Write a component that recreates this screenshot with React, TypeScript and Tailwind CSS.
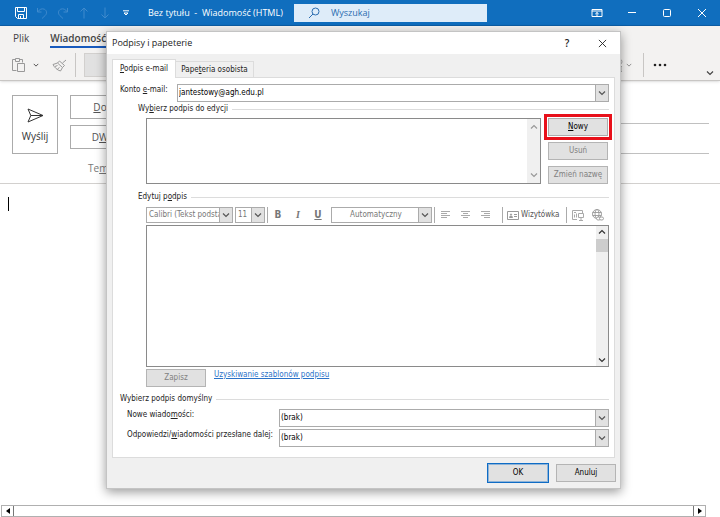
import { useState } from "react";
import type { ReactNode } from "react";
import clsx from "clsx";

function ChevronIcon({ className, up = false }: { className?: string; up?: boolean }) {
  return (
    <svg viewBox="0 0 8 8" className={clsx("w-2 h-2 shrink-0", className)} fill="none" stroke="currentColor" strokeWidth="1.2">
      <path d={up ? "M1 5.5 4 2.5 7 5.5" : "M1 2.5 4 5.5 7 2.5"} />
    </svg>
  );
}

function IconButton({ label, className, children }: { label: string; className?: string; children: ReactNode }) {
  return (
    <button type="button" aria-label={label} className={clsx("flex items-center justify-center shrink-0", className)}>
      {children}
    </button>
  );
}

function Combo({
  id,
  label,
  options,
  className,
  muted = false,
  centered = false,
}: {
  id: string;
  label?: string;
  options: string[];
  className?: string;
  muted?: boolean;
  centered?: boolean;
}) {
  return (
    <div className={clsx("flex items-stretch bg-white border border-[#ababab]", className)}>
      <select
        id={id}
        aria-label={label}
        className={clsx(
          "appearance-none flex-1 min-w-0 outline-none bg-white",
          muted ? "text-[#777] pl-[2px]" : "text-black pl-px",
          centered && "text-center"
        )}
      >
        {options.map((option) => (
          <option key={option}>{option}</option>
        ))}
      </select>
      <span className="w-[14px] -my-px -mr-px shrink-0 flex items-center justify-center bg-[#e1e1e1] border border-[#ababab] text-[#555] pointer-events-none">
        <ChevronIcon />
      </span>
    </div>
  );
}

function PushButton({ className, children, disabled }: { className?: string; children: ReactNode; disabled?: boolean }) {
  return (
    <button
      type="button"
      disabled={disabled}
      className={clsx(
        "w-[60px] h-[18px] shrink-0 flex items-center justify-center border bg-[#e1e1e1]",
        disabled ? "text-[#808080]" : "text-black",
        className ?? "border-[#b4b4b4]"
      )}
    >
      <span>{children}</span>
    </button>
  );
}

function GroupHeading({ className, children }: { className?: string; children: ReactNode }) {
  return (
    <div className={clsx("flex items-center gap-1 h-3 text-[#222]", className)}>
      <h2 className="whitespace-nowrap">{children}</h2>
      <span className="flex-1 h-px bg-[#dcdcdc]" />
    </div>
  );
}

function Separator({ className }: { className?: string }) {
  return <span className={clsx("w-px h-4 bg-[#ababab] shrink-0", className)} />;
}

function TitleBar() {
  return (
    <header className="flex items-center h-[26px] shrink-0 bg-[#106ebe] border-b border-[#0d5ea6] text-white">
      <div className="flex items-center gap-[5px] pl-[13px]">
        <IconButton label="Zapisz" className="w-4 h-4">
          <svg viewBox="0 0 14 14" className="w-[14px] h-[14px]" fill="none" stroke="currentColor">
            <path d="M1.5 1.5h11v11h-9l-2-2zM3.5 1.5v4h7v-4M4.5 12.5v-4h5v4M6.5 10v2.5" />
          </svg>
        </IconButton>
        <IconButton label="Cofnij" className="w-4 h-4 text-[#3f8acd]">
          <svg viewBox="0 0 12 12" className="w-3 h-3" fill="none" stroke="currentColor">
            <path d="M1.5 1v4h4M1.8 4.8C3.5 2.2 6 1.2 8.3 2.2c2.6 1.2 2.9 4.3 1 6.2L6 11.5" />
          </svg>
        </IconButton>
        <IconButton label="Wykonaj ponownie" className="w-4 h-4 text-[#3f8acd]">
          <svg viewBox="0 0 12 12" className="w-3 h-3" fill="none" stroke="currentColor">
            <path d="M10.5 1v4h-4M10.2 4.8C8.5 2.2 6 1.2 3.7 2.2c-2.6 1.2-2.9 4.3-1 6.2L6 11.5" />
          </svg>
        </IconButton>
        <IconButton label="Poprzedni element" className="w-4 h-4 text-[#3f8acd]">
          <svg viewBox="0 0 12 12" className="w-3 h-3" fill="none" stroke="currentColor">
            <path d="M6 11.5V1M2.5 4.5 6 1l3.5 3.5" />
          </svg>
        </IconButton>
        <IconButton label="Następny element" className="w-4 h-4 text-[#3f8acd]">
          <svg viewBox="0 0 12 12" className="w-3 h-3" fill="none" stroke="currentColor">
            <path d="M6 .5V11M2.5 7.5 6 11l3.5-3.5" />
          </svg>
        </IconButton>
        <IconButton label="Dostosuj" className="w-4 h-4">
          <svg viewBox="0 0 8 6" className="w-2 h-[6px]" fill="none" stroke="currentColor">
            <path d="M1 .8h6M2 3l2 2 2-2z" />
          </svg>
        </IconButton>
      </div>
      <h1 className="ml-[14px] w-[146px] shrink-0 whitespace-pre text-[9px]">Bez tytułu  -  Wiadomość (HTML)</h1>
      <label className="flex items-center w-[193px] h-[18px] bg-[#deecf9] text-[#2b6cb0]">
        <svg viewBox="0 0 12 12" className="w-3 h-3 ml-[14px] shrink-0" fill="none" stroke="currentColor">
          <circle cx="7.5" cy="4.5" r="3.5" />
          <path d="M5 7 1 11" />
        </svg>
        <input
          type="search"
          aria-label="Wyszukaj"
          placeholder="Wyszukaj"
          className="flex-1 min-w-0 ml-[11px] bg-transparent outline-none text-[9px] placeholder:text-[#2b6cb0]"
        />
      </label>
      <div className="ml-auto flex items-center gap-[19px] pr-[10px]">
        <IconButton label="Opcje wyświetlania wstążki" className="w-4 h-4">
          <svg viewBox="0 0 12 10" className="w-3 h-[10px]" fill="none" stroke="currentColor">
            <path d="M1 1.5h10v7H1zM1 3h10M6 8V4.5M4.3 6 6 4.5 7.7 6" />
          </svg>
        </IconButton>
        <IconButton label="Minimalizuj" className="w-4 h-4">
          <svg viewBox="0 0 10 10" className="w-[10px] h-[10px]" stroke="currentColor">
            <path d="M1 4.5h8" />
          </svg>
        </IconButton>
        <IconButton label="Maksymalizuj" className="w-4 h-4">
          <svg viewBox="0 0 10 10" className="w-[10px] h-[10px]" fill="none" stroke="currentColor">
            <rect x="1.5" y="1.5" width="7" height="7" rx="1" />
          </svg>
        </IconButton>
        <IconButton label="Zamknij okno" className="w-4 h-4">
          <svg viewBox="0 0 10 10" className="w-[10px] h-[10px]" stroke="currentColor">
            <path d="M1 1l8 8M9 1 1 9" />
          </svg>
        </IconButton>
      </div>
    </header>
  );
}

function Ribbon() {
  return (
    <div className="relative flex flex-col h-[55px] shrink-0 bg-[#f3f2f1] border-b border-[#c8c6c4] shadow-sm">
      <nav className="flex gap-[21px] pl-[13px] pt-1 text-[10px] leading-4 text-[#444]">
        <a href="#plik">Plik</a>
        <a href="#wiadomosc" className="font-semibold border-b-2 border-[#185abd] h-[18px]">
          Wiadomość
        </a>
      </nav>
      <div className="flex items-center h-6 mt-[5px] pl-[10px] pr-[2px]">
        <IconButton label="Wklej" className="w-4 h-4 text-[#999]">
          <svg viewBox="0 0 15 16" className="w-[15px] h-4" fill="none" stroke="currentColor">
            <path d="M5.5 13.5h-4v-11h3M8.5 2.5h3v3M4.5 1.5h4v3h-4zM6.5 6.5h7v8h-7z" />
          </svg>
        </IconButton>
        <IconButton label="Opcje wklejania" className="w-4 h-4 ml-[2px] text-[#444]">
          <ChevronIcon className="w-[6px] h-[6px]" />
        </IconButton>
        <IconButton label="Malarz formatów" className="w-4 h-4 ml-[7px] text-[#999]">
          <svg viewBox="0 0 15 13" className="w-[15px] h-[13px]" fill="none" stroke="currentColor">
            <path d="M14 1 10.5 4M7.5 2l5 4.5-2 2-5-4.5zM5.5 4 1 5.5c1.5 3 4 5.5 7.5 6.5l2-3.5M3 7.5l2.5-1M5.5 10l2-1.5" />
          </svg>
        </IconButton>
        <span className="w-px h-6 ml-2 bg-[#c8c6c4]" />
        <span className="w-20 h-6 ml-2 bg-[#e1e1e1] border border-[#d2d0ce]" />
        <IconButton label="Łącze" className="w-3 h-4 ml-auto text-[#aaa]">
          <svg viewBox="0 0 10 14" className="w-[10px] h-[14px]" fill="none" stroke="currentColor">
            <path d="M4 1.5h3q2 0 2 2.3t-2 2.2H5M5 8.5h4M8 8.5v5M5 13.5h4" />
          </svg>
        </IconButton>
        <IconButton label="Opcje łącza" className="w-2 h-4 ml-px text-[#888]">
          <ChevronIcon className="w-[6px] h-[6px]" />
        </IconButton>
        <span className="w-px h-6 ml-[10px] bg-[#c8c6c4]" />
        <IconButton label="Więcej poleceń" className="w-4 h-4 ml-2 text-[#222]">
          <svg viewBox="0 0 16 4" className="w-4 h-1" fill="currentColor">
            <circle cx="3" cy="2" r="1.3" />
            <circle cx="8" cy="2" r="1.3" />
            <circle cx="13" cy="2" r="1.3" />
          </svg>
        </IconButton>
        <IconButton label="Zwiń wstążkę" className="w-4 h-2 ml-[34px] self-end text-[#444]">
          <ChevronIcon />
        </IconButton>
      </div>
    </div>
  );
}

function MessageForm() {
  return (
    <main className="flex-1 flex flex-col bg-white text-[10px] text-[#555]">
      <div className="flex gap-3 pl-3 pr-[11px] pt-[14px] h-[103px] border-b border-[#d2d0ce]">
        <button type="button" className="w-[46px] h-[59px] shrink-0 flex flex-col items-center gap-[6px] pt-3 border border-[#ababab] text-[#333]">
          <svg viewBox="0 0 17 15" className="w-[17px] h-[15px]" fill="none" stroke="currentColor">
            <path d="M1 1l15 6.5L1 14l2.8-6.5zM3.8 7.5H16" />
          </svg>
          Wyślij
        </button>
        <div className="flex-1 flex flex-col gap-[6px]">
          <div className="flex">
            <button type="button" className="w-[60px] h-6 border border-[#ababab]">
              <u>D</u>o
            </button>
            <input aria-label="Do" className="flex-1 h-6 mt-[5px] -mb-[5px] ml-3 outline-none border-b border-[#c0c0c0]" />
          </div>
          <div className="flex">
            <button type="button" className="w-[60px] h-6 border border-[#ababab]">
              D<u>W</u>
            </button>
            <input aria-label="DW" className="flex-1 h-6 mt-[5px] -mb-[5px] ml-3 outline-none border-b border-[#c0c0c0]" />
          </div>
          <div className="flex pt-[6px]">
            <label htmlFor="subject" className="pl-[18px] w-[72px] text-[#777]">
              Te<u>m</u>at
            </label>
            <input id="subject" className="flex-1 h-4 outline-none" />
          </div>
        </div>
      </div>
      <div className="flex-1 pl-2 pt-[13px]">
        <span className="block w-px h-[14px] bg-black" />
      </div>
      <div className="flex items-stretch h-3 ml-px mr-[14px] border border-[#b0b0b0] bg-white text-black">
        <IconButton label="Przewiń w lewo" className="w-3 border-r border-[#777]">
          <svg viewBox="0 0 4 6" className="w-1 h-[6px]" fill="currentColor">
            <path d="M4 0v6L0 3z" />
          </svg>
        </IconButton>
        <span className="flex-1" />
        <IconButton label="Przewiń w prawo" className="w-3 border-l border-[#777]">
          <svg viewBox="0 0 4 6" className="w-1 h-[6px]" fill="currentColor">
            <path d="M0 0v6l4-3z" />
          </svg>
        </IconButton>
      </div>
    </main>
  );
}

function FormatToolbar() {
  return (
    <div className="flex items-center h-[18px] mt-[3px] ml-[26px] text-[#777]">
      <Combo id="font" label="Czcionka" options={["Calibri (Tekst podstawowy)"]} className="w-[87px] h-4 shrink-0" muted />
      <Combo id="size" label="Rozmiar" options={["11"]} className="w-[30px] h-4 ml-[2px] shrink-0" muted />
      <Separator className="ml-[2px]" />
      <button type="button" className="w-5 font-bold text-[10px]">B</button>
      <button type="button" className="w-5 font-bold italic text-[10px] font-['Liberation_Serif',serif]">I</button>
      <button type="button" className="w-5 font-bold underline text-[10px]">U</button>
      <Combo id="color" label="Kolor czcionki" options={["Automatyczny"]} className="w-[101px] h-4 ml-[3px] shrink-0" muted centered />
      <Separator className="ml-[2px]" />
      <div className="flex items-center gap-[11px] ml-[6px]">
        <IconButton label="Wyrównaj do lewej" className="w-[9px] h-3">
          <svg viewBox="0 0 9 8" className="w-[9px] h-2" stroke="#aaa">
            <path d="M0 .5h9M0 2.5h6M0 4.5h9M0 6.5h6" />
          </svg>
        </IconButton>
        <IconButton label="Wyśrodkuj" className="w-[9px] h-3">
          <svg viewBox="0 0 9 8" className="w-[9px] h-2" stroke="#aaa">
            <path d="M0 .5h9M2 2.5h5M0 4.5h9M2 6.5h5" />
          </svg>
        </IconButton>
        <IconButton label="Wyrównaj do prawej" className="w-[9px] h-3">
          <svg viewBox="0 0 9 8" className="w-[9px] h-2" stroke="#aaa">
            <path d="M0 .5h9M3 2.5h6M0 4.5h9M3 6.5h6" />
          </svg>
        </IconButton>
      </div>
      <Separator className="ml-3" />
      <button type="button" className="flex items-center gap-[2px] ml-1 w-[56px] text-[#555]">
        <svg viewBox="0 0 12 9" className="w-3 h-[9px] shrink-0" fill="none" stroke="#999">
          <path d="M.5.5h11v8H.5zM7 3.5h3M7 5.5h3" />
          <path d="M2.5 6.5a1.5 1.5 0 0 1 3 0z" fill="#999" />
          <circle cx="4" cy="3.5" r=".6" fill="#999" />
        </svg>
        Wizytówka
      </button>
      <Separator className="ml-[3px]" />
      <IconButton label="Wstaw obraz" className="w-3 h-3 ml-[5px]">
        <svg viewBox="0 0 12 12" className="w-3 h-3" fill="none" stroke="#aaa">
          <path d="M5 10.5H.5v-9h10V4M2.5 8.5v-3M4.5 8.5v-4M6.5 4.5h5v4h-5zM9 8.5v3M7 11.5h4" />
          <path d="M2 3.5h2" />
        </svg>
      </IconButton>
      <IconButton label="Wstaw hiperłącze" className="w-3 h-3 ml-2">
        <svg viewBox="0 0 12 12" className="w-3 h-3" fill="none" stroke="#999" strokeWidth=".9">
          <circle cx="5" cy="5" r="4.5" />
          <ellipse cx="5" cy="5" rx="2" ry="4.5" />
          <path d="M.5 3.5h9M.5 6.5h9" />
          <rect x="4.5" y="8" width="4" height="3" rx="1.5" fill="#fff" />
          <rect x="7.5" y="8" width="4" height="3" rx="1.5" fill="#fff" />
        </svg>
      </IconButton>
    </div>
  );
}

function SignatureDialog() {
  const [tab, setTab] = useState("mail");

  return (
    <section
      role="dialog"
      aria-label="Podpisy i papeterie"
      className="w-[515px] flex flex-col bg-[#f0f0f0] border border-[#c4c4c4] shadow-[0_3px_10px_rgba(0,0,0,0.4)] font-['DejaVu_Sans_Condensed','Open_Sans',sans-serif] text-[8px] leading-3 text-[#222]"
    >
      <div className="flex items-center h-[22px] pl-[5px] pr-3 bg-white font-['Open_Sans','Noto_Sans',sans-serif]">
        <h2 className="text-[9px]">Podpisy i papeterie</h2>
        <IconButton label="Pomoc" className="ml-auto w-4 h-4 text-[10px] font-semibold">
          ?
        </IconButton>
        <IconButton label="Zamknij" className="w-4 h-4 ml-[19px] -mr-[2px]">
          <svg viewBox="0 0 10 10" className="w-[9px] h-[9px]" stroke="currentColor">
            <path d="M1 1l8 8M9 1 1 9" />
          </svg>
        </IconButton>
      </div>

      {/* Tabs */}
      <div role="tablist" className="flex items-end h-[23px] pl-[5px]">
        <button
          type="button"
          role="tab"
          aria-selected={tab === "mail"}
          onClick={() => setTab("mail")}
          className="relative z-10 w-16 h-[19px] -mb-px bg-white border border-b-0 border-[#dcdcdc]"
        >
          <u>P</u>odpis e-mail
        </button>
        <button
          type="button"
          role="tab"
          aria-selected={tab === "stationery"}
          onClick={() => setTab("stationery")}
          className="w-[78px] h-4 bg-[#f0f0f0] border border-l-0 border-b-0 border-[#dcdcdc]"
        >
          Pape<u>t</u>eria osobista
        </button>
      </div>

      <div className="mx-[5px] pl-[7px] pr-[5px] pt-[6px] pb-[10px] bg-white border border-[#dcdcdc]">
        <div className="flex items-start">
          <label htmlFor="account" className="w-[57px] shrink-0">
            Konto <u>e</u>-mail:
          </label>
          <Combo id="account" options={["jantestowy@agh.edu.pl"]} className="flex-1 h-[18px]" />
        </div>

        <GroupHeading className="mt-px ml-[18px]">
          Wy<u>b</u>ierz podpis do edycji
        </GroupHeading>
        <div className="flex items-start gap-[7px] mt-[3px] ml-[26px]">
          <div className="flex-1 flex justify-end h-[66px] border border-[#8a8a8a]">
            <div className="flex flex-col justify-between items-center w-[13px] py-1 bg-[#f0f0f0] text-[#999]">
              <ChevronIcon up />
              <ChevronIcon />
            </div>
          </div>
          <div className="flex flex-col gap-[6px] pr-px">
            <PushButton className="border-[#adadad] outline-3 outline-offset-1 outline-[#e8101a]">
              <u>N</u>owy
            </PushButton>
            <PushButton disabled>Usuń</PushButton>
            <PushButton disabled>Zmień nazwę</PushButton>
          </div>
        </div>

        <GroupHeading className="mt-[7px] ml-[18px]">
          Edytuj p<u>o</u>dpis
        </GroupHeading>
        <FormatToolbar />
        <div className="flex h-[142px] mt-px ml-[26px] border border-[#8a8a8a]">
          <textarea aria-label="Edytuj podpis" className="flex-1 resize-none outline-none" />
          <div className="flex flex-col items-center w-3 py-[2px] bg-[#f0f0f0] text-[#333]">
            <ChevronIcon up />
            <span className="w-full h-[13px] mt-[3px] bg-[#cdcdcd]" />
            <ChevronIcon className="mt-auto" />
          </div>
        </div>
        <div className="flex items-start gap-2 mt-[2px] ml-[26px]">
          <PushButton disabled>Zapisz</PushButton>
          <a href="#szablony" className="text-[#2a72c8] underline">
            Uzyskiwanie szablonów podpisu
          </a>
        </div>

        <GroupHeading className="mt-[6px]">Wybierz podpis domyślny</GroupHeading>
        <div className="flex items-start mt-1 ml-[7px]">
          <label htmlFor="new-messages" className="w-[152px] shrink-0">
            Nowe wiado<u>m</u>ości:
          </label>
          <Combo id="new-messages" options={["(brak)"]} className="flex-1 h-[18px]" />
        </div>
        <div className="flex items-start mt-[2px] ml-[7px]">
          <label htmlFor="replies" className="w-[152px] shrink-0 whitespace-nowrap">
            Odpowiedzi/<u>w</u>iadomości przesłane dalej:
          </label>
          <Combo id="replies" options={["(brak)"]} className="flex-1 h-[18px]" />
        </div>
      </div>

      <div className="flex justify-end gap-2 pt-[6px] pb-[6px] pr-1">
        <PushButton className="border-[#8fb4d8] outline-1 outline-[#0f6cc5]">OK</PushButton>
        <PushButton>Anuluj</PushButton>
      </div>
    </section>
  );
}

export default function App() {
  return (
    <div className="relative min-h-screen flex flex-col font-['Open_Sans','Noto_Sans',sans-serif]">
      <TitleBar />
      <Ribbon />
      <MessageForm />
      <div className="absolute inset-0 flex items-start justify-center pt-[31px] pl-[7px]">
        <SignatureDialog />
      </div>
    </div>
  );
}
